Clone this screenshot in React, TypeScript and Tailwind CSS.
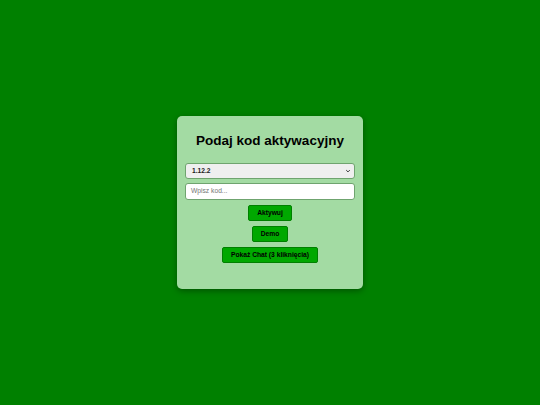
import React from "react";

export default function App() {
  const font = { fontFamily: '"Liberation Sans", Arial, sans-serif' };
  return (
    <div
      className="w-[540px] h-[405px] bg-[#008000] flex items-center justify-center"
      style={font}
    >
      <div className="w-[186px] h-[173px] bg-[#a3dba3] rounded-[5px] shadow-[0_2px_6px_rgba(0,0,0,0.35)] px-[8px] pt-[13px] flex flex-col items-center">
        <div className="h-[24px] w-full flex items-center justify-center text-[13.5px] font-bold text-black leading-none">
          Podaj kod aktywacyjny
        </div>
        <div className="mt-[10px] w-full h-[16px] bg-[#efefef] border border-[#6fa46f] rounded-[3px] flex items-center justify-between pl-[6px] pr-[3px]">
          <span className="text-[6.7px] font-bold text-[#222] leading-none">1.12.2</span>
          <svg width="6" height="6" viewBox="0 0 10 10">
            <path d="M2 3.5 L5 6.5 L8 3.5" fill="none" stroke="#333" strokeWidth="1.6" />
          </svg>
        </div>
        <div className="mt-[4px] w-full h-[17px] bg-white border border-[#6fa46f] rounded-[3px] flex items-center pl-[5px]">
          <span className="text-[6.7px] text-[#757575] leading-none">Wpisz kod...</span>
        </div>
        <div className="mt-[5px] h-[16px] px-[8px] bg-[#00a800] border border-[#008000] rounded-[2px] flex items-center justify-center text-[6.7px] font-bold text-black leading-none">
          Aktywuj
        </div>
        <div className="mt-[5px] h-[16px] px-[8px] bg-[#00a800] border border-[#008000] rounded-[2px] flex items-center justify-center text-[6.7px] font-bold text-black leading-none">
          Demo
        </div>
        <div className="mt-[5px] h-[16px] px-[8px] bg-[#00a800] border border-[#008000] rounded-[2px] flex items-center justify-center text-[6.7px] font-bold text-black leading-none">
          Pokaż Chat (3 kliknięcia)
        </div>
      </div>
    </div>
  );
}
